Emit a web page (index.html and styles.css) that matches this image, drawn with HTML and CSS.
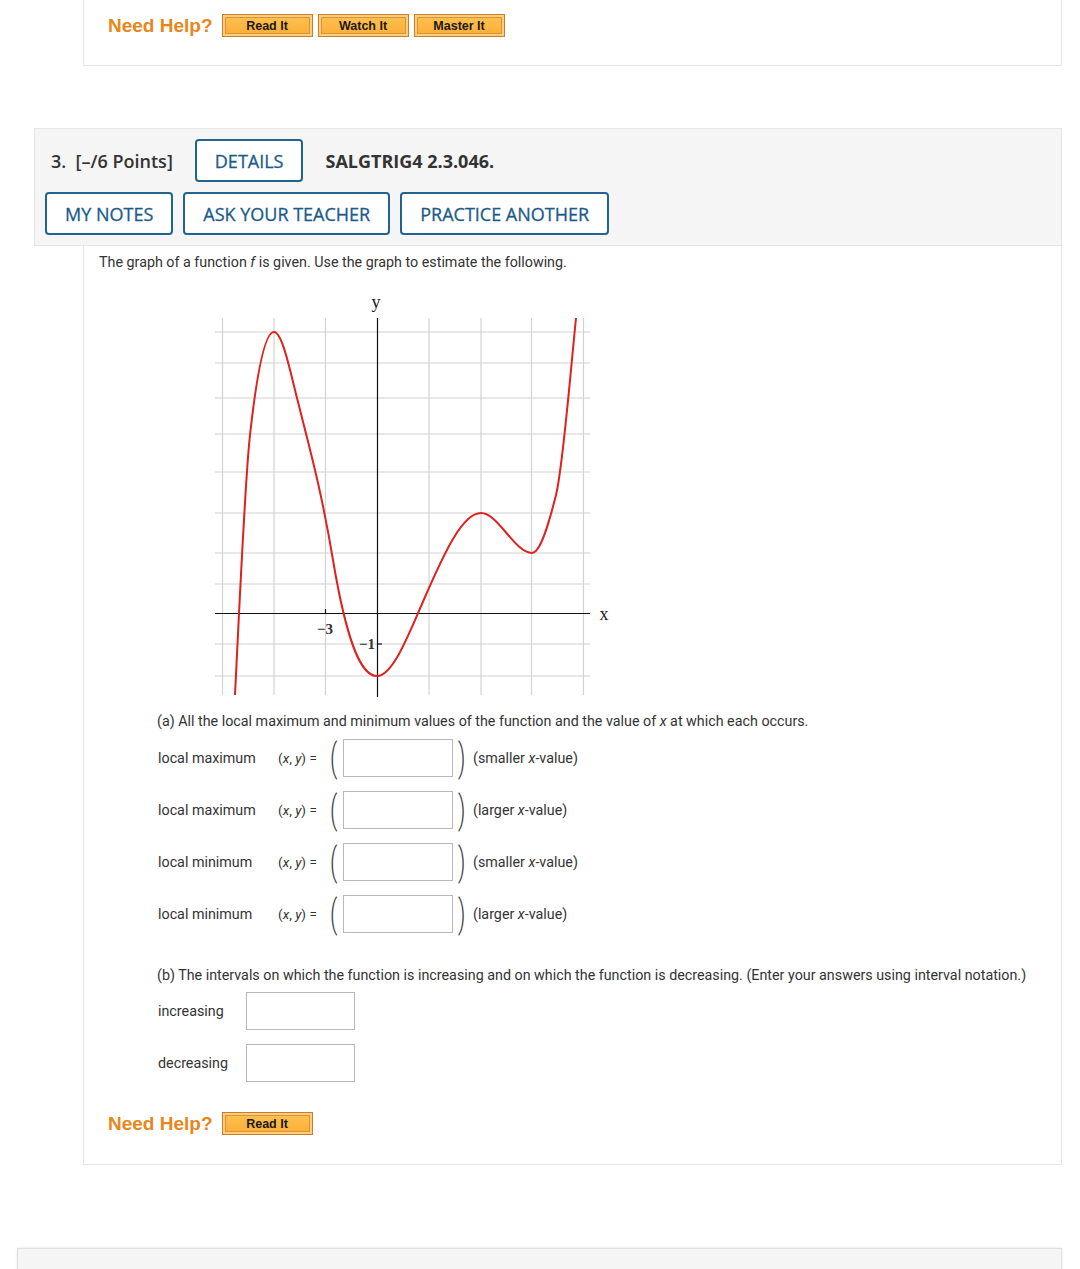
FILE: index.html
```html
<!DOCTYPE html>
<html lang="en">

<head>
    <meta charset="UTF-8">
    <meta name="viewport" content="width=device-width, initial-scale=1.0">
    <title>SALGTRIG4 2.3.046</title>
    <link rel="stylesheet" href="styles.css">
</head>

<body>

    <div class="card card-prev">
        <div class="help">
            <span class="help-label">Need Help?</span>
            <button class="help-btn">Read It</button>
            <button class="help-btn">Watch It</button>
            <button class="help-btn">Master It</button>
        </div>
    </div>

    <div class="question">
        <div class="q-head">
            <div class="q-row">
                <span class="q-num">3.&nbsp; [–/6 Points]</span>
                <button class="q-btn">DETAILS</button>
                <span class="q-code">SALGTRIG4 2.3.046.</span>
            </div>
            <div class="q-row tools">
                <button class="q-btn">MY NOTES</button>
                <button class="q-btn">ASK YOUR TEACHER</button>
                <button class="q-btn">PRACTICE ANOTHER</button>
            </div>
        </div>

        <div class="card q-body">
            <p class="intro">The graph of a function <i>f</i> is given. Use the graph to estimate the following.</p>

            <svg class="graph" width="420" height="415" viewBox="200 285 420 415">
                <g class="grid">
                    <line x1="222.5" y1="318" x2="222.5" y2="695" />
                    <line x1="274" y1="318" x2="274" y2="695" />
                    <line x1="325.5" y1="318" x2="325.5" y2="695" />
                    <line x1="429" y1="318" x2="429" y2="695" />
                    <line x1="481" y1="318" x2="481" y2="695" />
                    <line x1="531.5" y1="318" x2="531.5" y2="695" />
                    <line x1="583.5" y1="318" x2="583.5" y2="695" />
                    <line x1="215" y1="332" x2="590" y2="332" />
                    <line x1="215" y1="363" x2="590" y2="363" />
                    <line x1="215" y1="398" x2="590" y2="398" />
                    <line x1="215" y1="434" x2="590" y2="434" />
                    <line x1="215" y1="472" x2="590" y2="472" />
                    <line x1="215" y1="513" x2="590" y2="513" />
                    <line x1="215" y1="553" x2="590" y2="553" />
                    <line x1="215" y1="584" x2="590" y2="584" />
                    <line x1="215" y1="644" x2="590" y2="644" />
                    <line x1="215" y1="676" x2="590" y2="676" />
                </g>
                <g class="axes">
                    <line x1="215" y1="613.5" x2="590" y2="613.5" />
                    <line x1="377.5" y1="318" x2="377.5" y2="697" />
                    <line x1="325.5" y1="609" x2="325.5" y2="613" />
                    <line x1="378" y1="644" x2="382" y2="644" />
                </g>
                <text class="lbl" x="376" y="308">y</text>
                <text class="lbl" x="604" y="620">x</text>
                <text class="num" x="325" y="634">−3</text>
                <text class="num" x="367" y="649">−1</text>
                <path class="curve" d="M235,695 C240,595 245,480 250,435 C258,363 266,332 274,332 C282,332 289.3,367.3 297,398 C309,446 321,488 333,560 C347.7,648 362.3,676 377,676 C393,676 409,633.8 425,597 C443.7,554.1 462.3,513 481,513 C489.5,513 498,522.8 506.5,533 C515,543.2 523.5,553 532,553 C540,553 548,527 556,495 C562.7,468.3 569.3,384.7 576,318" />
            </svg>

            <div class="part">
                <p class="part-text">(a) All the local maximum and minimum values of the function and the value of <i>x</i> at which each occurs.</p>
                <div class="ans-row">
                    <span class="ans-label">local maximum</span>
                    <span class="xy">(<i>x</i>, <i>y</i>) =</span>
                    <span class="paren">(</span><input class="box" type="text"><span class="paren close">)</span>
                    <span class="hint">(smaller <i>x</i>-value)</span>
                </div>
                <div class="ans-row">
                    <span class="ans-label">local maximum</span>
                    <span class="xy">(<i>x</i>, <i>y</i>) =</span>
                    <span class="paren">(</span><input class="box" type="text"><span class="paren close">)</span>
                    <span class="hint">(larger <i>x</i>-value)</span>
                </div>
                <div class="ans-row">
                    <span class="ans-label">local minimum</span>
                    <span class="xy">(<i>x</i>, <i>y</i>) =</span>
                    <span class="paren">(</span><input class="box" type="text"><span class="paren close">)</span>
                    <span class="hint">(smaller <i>x</i>-value)</span>
                </div>
                <div class="ans-row">
                    <span class="ans-label">local minimum</span>
                    <span class="xy">(<i>x</i>, <i>y</i>) =</span>
                    <span class="paren">(</span><input class="box" type="text"><span class="paren close">)</span>
                    <span class="hint">(larger <i>x</i>-value)</span>
                </div>

                <p class="part-text part-b">(b) The intervals on which the function is increasing and on which the function is decreasing. (Enter your answers using interval notation.)</p>
                <div class="ans-row short">
                    <span class="ans-label">increasing</span>
                    <input class="box small" type="text">
                </div>
                <div class="ans-row short">
                    <span class="ans-label">decreasing</span>
                    <input class="box small" type="text">
                </div>
            </div>

            <div class="help help-body">
                <span class="help-label">Need Help?</span>
                <button class="help-btn">Read It</button>
            </div>
        </div>
    </div>

    <div class="next"></div>

</body>

</html>
```

FILE: styles.css
```css
html,
body {
    margin: 0;
    padding: 0;
    background: #fff;
    font-family: 'Roboto', 'Liberation Sans', sans-serif;
    color: #333;
    overflow: hidden;
}

.card {
    background: #fff;
    border: 1px solid #e6e6e6;
    border-top: none;
    margin: 0 18px 0 83px;
}

.card-prev {
    padding: 14px 24px 28px;
}
/* Need help */

.help {
    display: flex;
    align-items: center;
    gap: 5px;
}

.help-label {
    font-family: 'Liberation Sans', Arial, sans-serif;
    font-weight: bold;
    font-size: 19px;
    color: #e8861b;
    margin-right: 4px;
}

.help-btn {
    width: 91px;
    height: 23px;
    padding: 0;
    font-family: 'Liberation Sans', Arial, sans-serif;
    font-weight: bold;
    font-size: 12.5px;
    color: #1a1a1a;
    background: linear-gradient(#ffc254, #fbad34);
    border: 1px solid #c97c2b;
    box-shadow: inset 0 0 0 2px #fdcf7c, inset 0 0 0 3px #dc9337;
}
/* Question header */

.question {
    margin-top: 62px;
}

.q-head {
    margin: 0 18px 0 34px;
    padding: 10px;
    background: #f5f5f5;
    border: 1px solid #e6e6e6;
    font-family: 'Open Sans', 'Liberation Sans', sans-serif;
}

.q-row {
    display: flex;
    align-items: center;
    gap: 22px;
}

.q-row.tools {
    gap: 10px;
    margin-top: 10px;
}

.q-num {
    font-size: 18px;
    font-weight: 600;
    color: #333;
    padding-left: 6px;
}

.q-code {
    font-size: 18px;
    font-weight: 700;
    color: #333;
}

.q-btn {
    height: 43px;
    padding: 0 18px;
    font-family: 'Open Sans', 'Liberation Sans', sans-serif;
    font-size: 18px;
    font-weight: 500;
    -webkit-text-stroke: 0.3px #1b5b89;
    color: #1b5b89;
    background: #fff;
    border: 2px solid #22638f;
    border-radius: 4px;
}
/* Question body */

.q-body {
    padding: 6px 15px 29px;
}

.intro {
    margin: 0;
    font-size: 14.3px;
    line-height: 20px;
}

.graph {
    display: block;
    margin: 13px 0 0 101px;
}

.grid line {
    stroke: #d2d2d2;
    stroke-width: 1.2;
}

.axes line {
    stroke: #111;
    stroke-width: 1.2;
}

.lbl {
    font-family: 'Liberation Serif', serif;
    font-size: 18px;
    text-anchor: middle;
    fill: #222;
}

.num {
    font-family: 'Liberation Serif', serif;
    font-size: 15px;
    font-weight: bold;
    text-anchor: middle;
    fill: #333;
}

.curve {
    fill: none;
    stroke: #e0201e;
    stroke-width: 2;
}

.part {
    margin-left: 58px;
}

.part-text {
    margin: 11px 0 8px;
    font-size: 14.3px;
    line-height: 20px;
}

.part-b {
    margin: 32px 0 7px;
}

.ans-row {
    display: flex;
    align-items: center;
    height: 38px;
    margin-bottom: 14px;
    font-size: 14.3px;
    padding-left: 1px;
}

.ans-label {
    width: 120px;
}

.short .ans-label {
    width: 88px;
}

.xy {
    width: 52px;
    font-size: 13.5px;
}

.paren {
    width: 13px;
    font-size: 38px;
    font-weight: 300;
    line-height: 38px;
    color: #444;
    text-align: left;
    transform: scaleX(0.6);
    transform-origin: left center;
}

.paren.close {
    width: 15px;
    margin-left: 5px;
}

.box {
    box-sizing: border-box;
    width: 110px;
    height: 38px;
    margin: 0;
    border: 1px solid #b8b8b8;
    background: #fff;
}

.box.small {
    width: 109px;
}

.hint {
    margin-left: 0;
}

.help-body {
    margin: 30px 0 0 9px;
}
/* Next question */

.next {
    margin: 83px 18px 0 17px;
    height: 60px;
    background: #f5f5f5;
    border: 1px solid #e0e0e0;
    box-shadow: 0 0 3px rgba(0, 0, 0, 0.1);
}
```
